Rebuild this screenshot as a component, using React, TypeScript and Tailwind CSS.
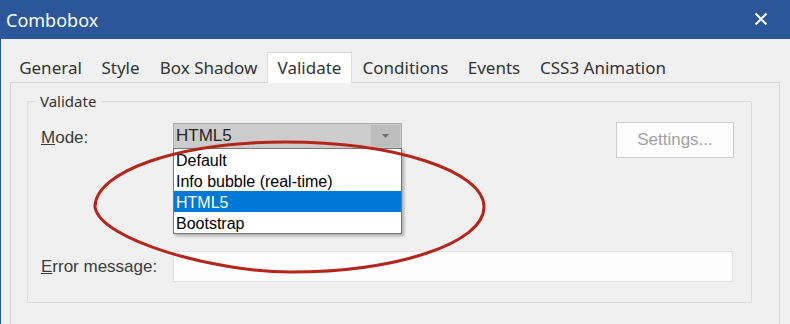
import React from "react";

const tabs = [
  { label: "General", width: "w-[81px]" },
  { label: "Style", width: "w-[59px]" },
  { label: "Box Shadow", width: "w-[117px]" },
  { label: "Validate", width: "w-[85px]", active: true },
  { label: "Conditions", width: "w-[107px]" },
  { label: "Events", width: "w-[70px]" },
  { label: "CSS3 Animation", width: "w-[148px]" },
];

const modes = ["Default", "Info bubble (real-time)", "HTML5", "Bootstrap"];

const arial = "font-['Liberation_Sans',Arial,sans-serif]";

export default function App() {
  return (
    <div className="relative h-[324px] w-[790px] overflow-hidden border-l border-[#2b579a] bg-[#f0f0f0] font-['Noto_Sans',sans-serif]">
      {/* title bar */}
      <div className="flex h-[39px] items-start justify-between bg-[#2b579a]">
        <span className="pl-[5px] pt-[8px] text-[18px] leading-[25px] text-white">Combobox</span>
        <svg className="mr-[22px] mt-[12px]" width="14" height="14" viewBox="0 0 14 14">
          <path d="M1.5 1.5 L12.5 12.5 M12.5 1.5 L1.5 12.5" stroke="#ffffff" strokeWidth="2.1" />
        </svg>
      </div>

      {/* tabs */}
      <div className="relative z-10 mt-[13px] flex h-[31px] pl-[9px]">
        {tabs.map((tab) => (
          <div
            key={tab.label}
            className={
              tab.active
                ? `${tab.width} h-[31px] border border-b-0 border-[#d9d9d9] bg-white pt-[3px] text-center text-[17px] leading-[23px] text-[#333333]`
                : `${tab.width} h-[31px] border border-b-0 border-transparent pt-[3px] text-center text-[17px] leading-[23px] text-[#333333]`
            }
          >
            {tab.label}
          </div>
        ))}
      </div>

      {/* tab page */}
      <div className="ml-[9px] mt-[-1px] h-[260px] w-[770px] border border-[#d5d5d5] pl-[16px] pt-[8px]">
        <fieldset className="w-[725px] rounded-[2px] border border-[#dcdcdc] pb-[20px]">
          <legend className="ml-[7px] px-[5px] text-[15px] leading-[20px] text-[#333333]">Validate</legend>

          <div className={`mt-[11px] flex items-start pl-[13px] pr-[17px] ${arial}`}>
            <div className="mt-[1px] flex h-[26px] items-center">
              <span className="mt-[3px] w-[132px] text-[17px] leading-[20px] text-[#3c3c3c]">
                <span className="underline">M</span>ode:
              </span>

              <div className="relative flex h-[26px] w-[229px] border border-[#adadad] bg-[#cccccc] p-[1px]">
                <span className="flex-1 pl-[1px] text-[17px] leading-[22px] text-[#262626]">HTML5</span>
                <div className="flex w-[29px] items-center justify-center bg-[#bdbdbd]">
                  <svg width="7" height="4" viewBox="0 0 7 4">
                    <polygon points="0,0 7,0 3.5,4" fill="#6d6d6d" />
                  </svg>
                </div>

                <div className="absolute left-[-1px] top-[24px] z-20 w-[229px] border border-[#7a7a7a] bg-white shadow-[2px_2px_3px_rgba(0,0,0,0.3)]">
                  {modes.map((mode) => (
                    <div
                      key={mode}
                      className={
                        mode === "HTML5"
                          ? "h-[21px] bg-[#0078d7] pl-[2px] text-[16px] leading-[23px] text-white"
                          : "h-[21px] pl-[2px] text-[16px] leading-[23px] text-black"
                      }
                    >
                      {mode}
                    </div>
                  ))}
                </div>
              </div>
            </div>

            <div className="ml-auto flex h-[36px] w-[118px] items-center justify-center border border-[#cccccc] bg-[#fdfdfd] text-[17px] text-[#a2a2a2]">
              Settings...
            </div>
          </div>

          <div className={`mt-[93px] flex items-center pl-[13px] ${arial}`}>
            <span className="w-[132px] text-[17px] leading-[20px] text-[#3c3c3c]">
              <span className="underline">E</span>rror message:
            </span>
            <div className="h-[31px] w-[560px] border border-[#e3e3e3] bg-[#fdfdfd]" />
          </div>
        </fieldset>
      </div>

      {/* hand-drawn annotation */}
      <svg
        className="pointer-events-none absolute left-[-1px] top-0 z-30"
        width="790"
        height="324"
        viewBox="0 0 790 324"
      >
        <path
          d="M95 207 C95 171 180 142 285 142 C395 142 484 171 484 207 C484 243 397 272 290 272 C215 272 100 240 95 207 Z"
          fill="none"
          stroke="#b3261a"
          strokeWidth="3"
        />
      </svg>
    </div>
  );
}
